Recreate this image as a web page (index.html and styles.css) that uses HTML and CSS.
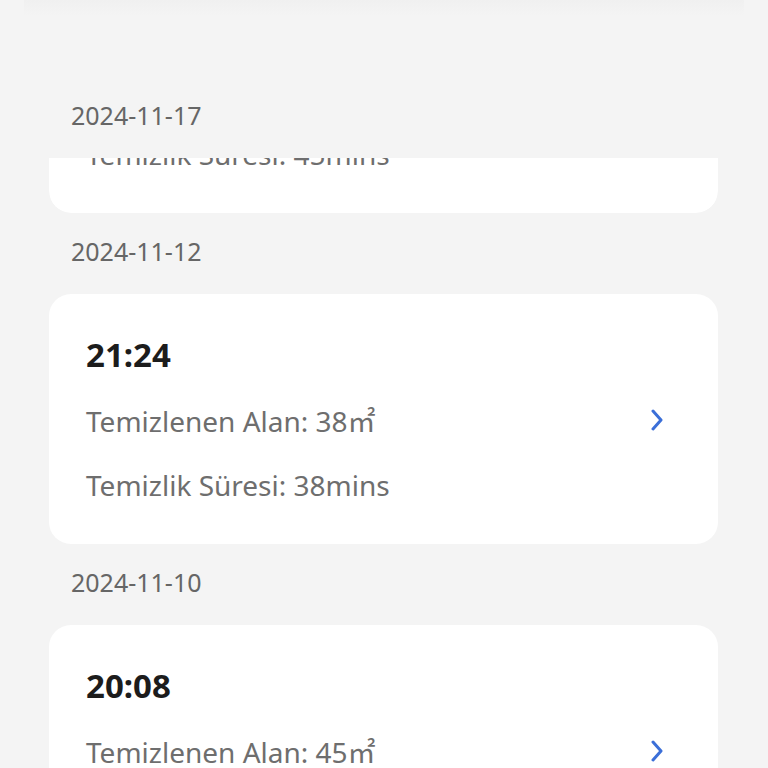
FILE: index.html
```html
<!DOCTYPE html>
<html lang="tr">
<head>
<meta charset="utf-8">
<title>Temizlik Geçmişi</title>
<link rel="stylesheet" href="styles.css">
</head>
<body>
<div class="top-shade"></div>
<main class="list">
  <div class="date">2024-11-17</div>
  <div class="card-clip">
    <div class="card">
      <div class="info">
        <div class="time">22:10</div>
        <div class="line first">Temizlenen Alan: 45<span class="unit">㎡</span></div>
        <div class="line">Temizlik Süresi: 45mins</div>
      </div>
      <svg class="chev" viewBox="0 0 12 22" width="12" height="22"><polyline points="2,2 10,11 2,20"/></svg>
    </div>
  </div>

  <div class="date">2024-11-12</div>
  <div class="card">
    <div class="info">
      <div class="time">21:24</div>
      <div class="line first">Temizlenen Alan: 38<span class="unit">㎡</span></div>
      <div class="line">Temizlik Süresi: 38mins</div>
    </div>
    <svg class="chev" viewBox="0 0 12 22" width="12" height="22"><polyline points="2,2 10,11 2,20"/></svg>
  </div>

  <div class="date">2024-11-10</div>
  <div class="card">
    <div class="info">
      <div class="time">20:08</div>
      <div class="line first">Temizlenen Alan: 45<span class="unit">㎡</span></div>
      <div class="line">Temizlik Süresi: 44mins</div>
    </div>
    <svg class="chev" viewBox="0 0 12 22" width="12" height="22"><polyline points="2,2 10,11 2,20"/></svg>
  </div>
</main>
</body>
</html>
```

FILE: styles.css
```css
html, body {
  margin: 0;
  padding: 0;
  height: 100%;
  overflow: hidden;
  background: #f4f4f4;
  font-family: "Noto Sans", "Open Sans", "Noto Sans CJK SC", sans-serif;
}

.top-shade {
  height: 16px;
  margin: 0 24px;
  background: linear-gradient(to bottom, #f0f0f0, #f4f4f4);
}

.list {
  margin: 61px 50px 0 49px;
}

.date {
  padding: 19px 0 24px 22px;
  line-height: 38px;
  font-size: 25px;
  color: #666666;
}

.card-clip {
  height: 55px;
  overflow: hidden;
  display: flex;
  flex-direction: column;
  justify-content: flex-end;
  border-radius: 0 0 22px 22px;
}

.card {
  flex-shrink: 0;
  height: 250px;
  box-sizing: border-box;
  background: #ffffff;
  border-radius: 22px;
  padding: 40px 55px 39px 37px;
  display: flex;
  align-items: center;
}

.info {
  flex: 1;
  align-self: flex-start;
}

.time {
  font-size: 33px;
  line-height: 41px;
  font-weight: 700;
  color: #1c1c1c;
}

.line {
  font-size: 28px;
  line-height: 40px;
  color: #6e6e6e;
  margin-top: 24px;
}

.line.first {
  margin-top: 25px;
}

.unit {
  font-family: "Noto Sans CJK SC", sans-serif;
}

.chev {
  display: block;
}

.chev polyline {
  fill: none;
  stroke: #3b6fd8;
  stroke-width: 3;
  stroke-linecap: round;
  stroke-linejoin: round;
}
```
